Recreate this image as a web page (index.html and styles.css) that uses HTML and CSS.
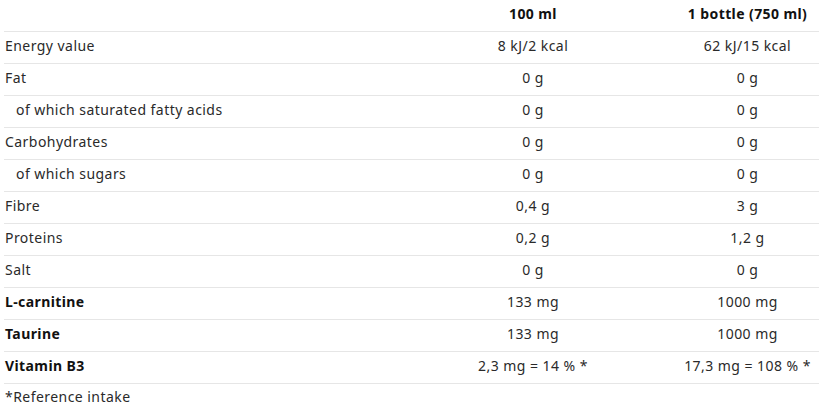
FILE: index.html
```html
<!DOCTYPE html>
<html lang="en">
<head>
<meta charset="utf-8">
<link rel="stylesheet" href="styles.css">
</head>
<body>
<div class="wrap">
  <div class="table">
    <div class="row head"><div class="c1"></div><div class="c2">100 ml</div><div class="c3">1 bottle (750 ml)</div></div>
    <div class="row"><div class="c1">Energy value</div><div class="c2">8 kJ/2 kcal</div><div class="c3">62 kJ/15 kcal</div></div>
    <div class="row"><div class="c1">Fat</div><div class="c2">0 g</div><div class="c3">0 g</div></div>
    <div class="row"><div class="c1 sub">of which saturated fatty acids</div><div class="c2">0 g</div><div class="c3">0 g</div></div>
    <div class="row"><div class="c1">Carbohydrates</div><div class="c2">0 g</div><div class="c3">0 g</div></div>
    <div class="row"><div class="c1 sub">of which sugars</div><div class="c2">0 g</div><div class="c3">0 g</div></div>
    <div class="row"><div class="c1">Fibre</div><div class="c2">0,4 g</div><div class="c3">3 g</div></div>
    <div class="row"><div class="c1">Proteins</div><div class="c2">0,2 g</div><div class="c3">1,2 g</div></div>
    <div class="row"><div class="c1">Salt</div><div class="c2">0 g</div><div class="c3">0 g</div></div>
    <div class="row"><div class="c1 bold">L-carnitine</div><div class="c2">133 mg</div><div class="c3">1000 mg</div></div>
    <div class="row"><div class="c1 bold">Taurine</div><div class="c2">133 mg</div><div class="c3">1000 mg</div></div>
    <div class="row"><div class="c1 bold">Vitamin B3</div><div class="c2">2,3 mg = 14 % *</div><div class="c3">17,3 mg = 108 % *</div></div>
  </div>
  <p class="note">*Reference intake</p>
</div>
</body>
</html>
```
FILE: styles.css
```css
html, body { margin: 0; padding: 0; background: #fff; }
body {
  font-family: "Noto Sans", "Open Sans", sans-serif;
  font-size: 14px;
  letter-spacing: 0.45px;
  color: #2a2a2a;
}
.wrap { padding-left: 4px; }
.table { display: flex; flex-direction: column; }
.row {
  display: grid;
  grid-template-columns: 386px 286px 143px;
  height: 31px;
  border-bottom: 1px solid #e6e6e6;
  align-items: center;
  padding-bottom: 0;
  line-height: 27px;
}
.row > div { height: 27px; margin-top: -4px; }
.row.head { font-weight: 700; color: #111; letter-spacing: 0.4px; }
.c1 { padding-left: 1px; }
.c1.sub { padding-left: 12px; }
.c1.bold { font-weight: 700; color: #111; letter-spacing: 0.4px; }
.c2, .c3 { text-align: center; }
.note { margin: 0; padding-left: 1px; height: 30px; line-height: 26px; }
```
